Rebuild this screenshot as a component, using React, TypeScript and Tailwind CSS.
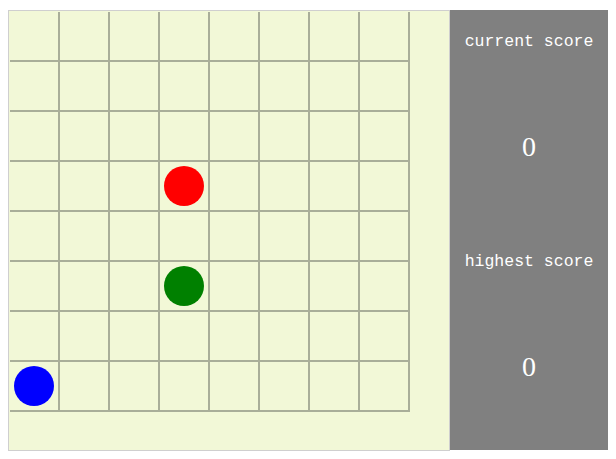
const ROWS = 8;
const COLS = 8;

const pieces: Record<string, string> = {
  "3-3": "bg-[#ff0000]",
  "5-3": "bg-[#008000]",
  "7-0": "bg-[#0000ff]",
};

function Board() {
  return (
    <div className="h-[441px] w-[442px] border border-[#cfcfcf] bg-[#f2f8d7]">
      <div className="ml-px mt-px grid w-[400px] grid-cols-8">
        {Array.from({ length: ROWS * COLS }).map((_, i) => {
          const r = Math.floor(i / COLS);
          const c = i % COLS;
          const piece = pieces[`${r}-${c}`];
          return (
            <div
              key={i}
              className="flex h-[50px] w-[50px] items-center justify-center border-b-2 border-r-2 border-[#a9ae99]"
            >
              {piece && <div className={`h-10 w-10 rounded-full ${piece}`} />}
            </div>
          );
        })}
      </div>
    </div>
  );
}

function ScoreBlock({ label, value }: { label: string; value: number }) {
  return (
    <div className="flex h-[220px] flex-col items-center">
      <div className="mt-[22px] font-['Liberation_Mono',monospace] text-[16.5px] leading-5 text-white">
        {label}
      </div>
      <div className="mt-[79px] font-['Liberation_Serif',serif] text-[28px] leading-8 text-white">
        {value}
      </div>
    </div>
  );
}

export default function App() {
  return (
    <div className="flex px-2 pt-[10px]">
      <Board />
      <div className="h-[440px] w-[158px] bg-[#808080]">
        <ScoreBlock label="current score" value={0} />
        <ScoreBlock label="highest score" value={0} />
      </div>
    </div>
  );
}
